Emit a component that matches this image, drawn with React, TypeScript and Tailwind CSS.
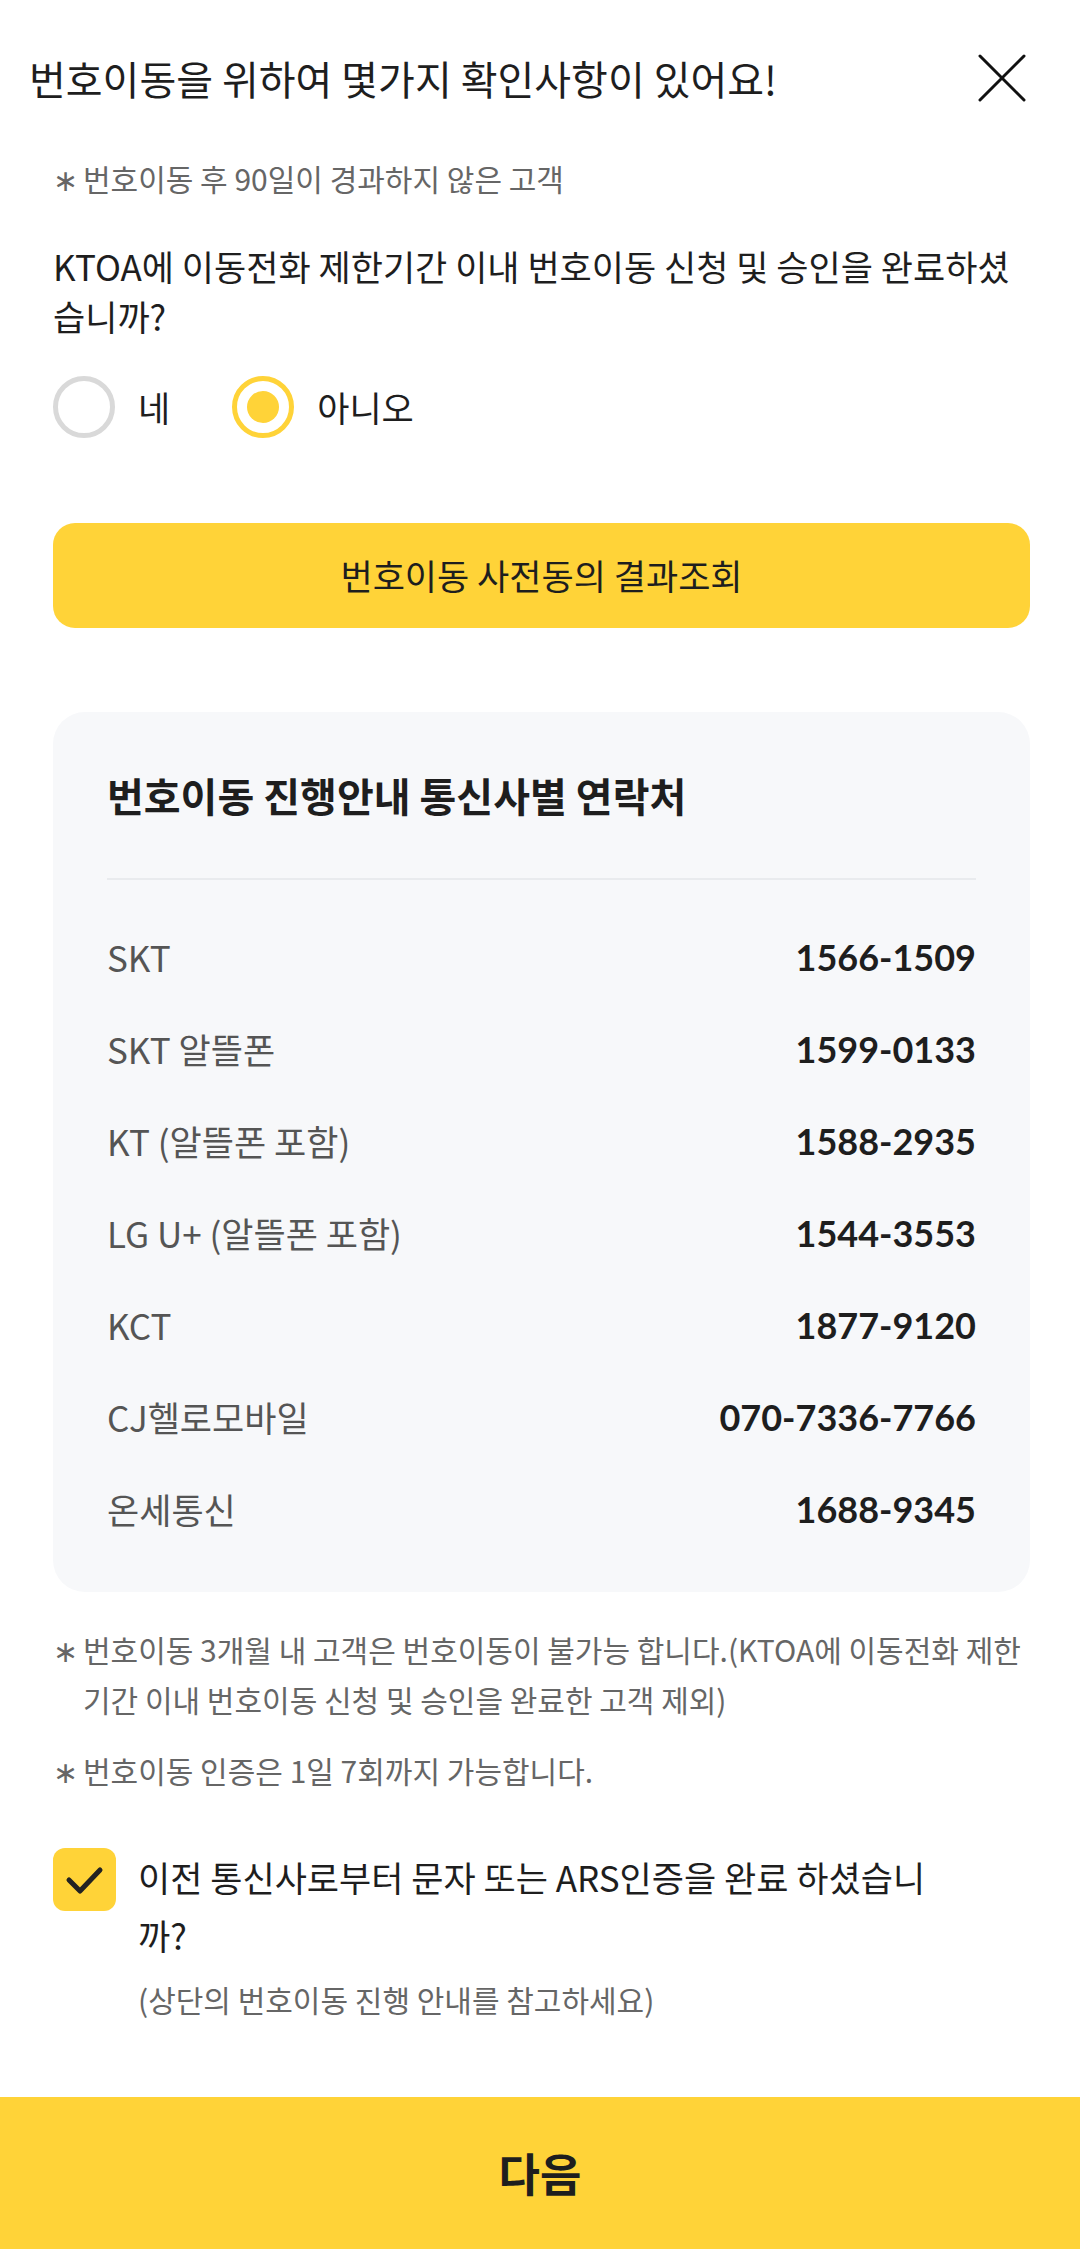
import { useState } from 'react';

const carriers = [
  { name: 'SKT', phone: '1566-1509' },
  { name: 'SKT 알뜰폰', phone: '1599-0133' },
  { name: 'KT (알뜰폰 포함)', phone: '1588-2935' },
  { name: 'LG U+ (알뜰폰 포함)', phone: '1544-3553' },
  { name: 'KCT', phone: '1877-9120' },
  { name: 'CJ헬로모바일', phone: '070-7336-7766' },
  { name: '온세통신', phone: '1688-9345' },
];

const Note = ({ children }: { children: React.ReactNode }) => (
  <div className="flex text-[30px] leading-[50px] text-[#666]">
    <span className="w-[30px] shrink-0">∗</span>
    <span>{children}</span>
  </div>
);

const App = () => {
  const [agree, setAgree] = useState(false);
  const [checked, setChecked] = useState(true);

  return (
    <main className="w-[1080px] min-h-[2249px] bg-white text-[#1e1e1e] font-['Noto_Sans_CJK_KR',sans-serif] flex flex-col">
      <header className="flex items-center justify-between pt-[48px] pl-[29px] pr-[54px] h-[108px]">
        <h1 className="text-[40px] leading-[60px]">번호이동을 위하여 몇가지 확인사항이 있어요!</h1>
        <button className="w-[48px] h-[48px]" aria-label="닫기">
          <svg width="48" height="48" viewBox="0 0 48 48" fill="none" stroke="#111" strokeWidth="3" strokeLinecap="round">
            <path d="M2 2 L46 46 M46 2 L2 46" />
          </svg>
        </button>
      </header>

      <section className="pl-[53px] pr-[50px]">
        <div className="mt-[50px] flex text-[30px] leading-[40px] text-[#666]">
          <span className="w-[30px] shrink-0">∗</span>
          <span>번호이동 후 90일이 경과하지 않은 고객</span>
        </div>

        <p className="mt-[43px] text-[35px] leading-[50px]">
          KTOA에 이동전화 제한기간 이내 번호이동 신청 및 승인을 완료하셨습니까?
        </p>

        <div className="mt-[35px] flex items-center h-[62px]">
          <label className="flex items-center gap-[23px] cursor-pointer" onClick={() => setAgree(true)}>
            <span
              className={
                agree
                  ? 'w-[62px] h-[62px] rounded-full border-[5px] border-[#ffd338] flex items-center justify-center'
                  : 'w-[62px] h-[62px] rounded-full border-[5px] border-[#d9d9d9] flex items-center justify-center'
              }
            >
              {agree && <span className="w-[32px] h-[32px] rounded-full bg-[#ffd338]" />}
            </span>
            <span className="text-[35px]">네</span>
          </label>
          <label className="ml-[62px] flex items-center gap-[23px] cursor-pointer" onClick={() => setAgree(false)}>
            <span
              className={
                !agree
                  ? 'w-[62px] h-[62px] rounded-full border-[5px] border-[#ffd338] flex items-center justify-center'
                  : 'w-[62px] h-[62px] rounded-full border-[5px] border-[#d9d9d9] flex items-center justify-center'
              }
            >
              {!agree && <span className="w-[32px] h-[32px] rounded-full bg-[#ffd338]" />}
            </span>
            <span className="text-[35px]">아니오</span>
          </label>
        </div>

        <button className="mt-[85px] w-full h-[105px] rounded-[22px] bg-[#ffd338] text-[35px]">
          번호이동 사전동의 결과조회
        </button>

        <div className="mt-[84px] rounded-[32px] bg-[#f7f8fa] px-[54px] pt-[57px] pb-[37px]">
          <h2 className="text-[40px] leading-[52px] font-bold">번호이동 진행안내 통신사별 연락처</h2>
          <div className="mt-[57px] h-[2px] bg-[#e9ebee]" />
          <ul className="mt-[31px]">
            {carriers.map((c) => (
              <li key={c.name} className="flex items-center justify-between h-[92px]">
                <span className="text-[35px] text-[#555]">{c.name}</span>
                <span className="text-[36px] font-bold font-['Lato','Noto_Sans_CJK_KR',sans-serif]">{c.phone}</span>
              </li>
            ))}
          </ul>
        </div>

        <div className="mt-[32px]">
          <Note>번호이동 3개월 내 고객은 번호이동이 불가능 합니다.(KTOA에 이동전화 제한기간 이내 번호이동 신청 및 승인을 완료한 고객 제외)</Note>
        </div>
        <div className="mt-[21px]">
          <Note>번호이동 인증은 1일 7회까지 가능합니다.</Note>
        </div>

        <div className="mt-[53px] flex gap-[22px]">
          <button
            className={
              checked
                ? 'w-[63px] h-[63px] shrink-0 rounded-[12px] bg-[#ffd338] flex items-center justify-center'
                : 'w-[63px] h-[63px] shrink-0 rounded-[12px] border-[3px] border-[#d9d9d9] flex items-center justify-center'
            }
            onClick={() => setChecked(!checked)}
            aria-label="확인"
          >
            {checked && (
              <svg width="63" height="63" viewBox="0 0 63 63" fill="none" stroke="#222" strokeWidth="5" strokeLinecap="round" strokeLinejoin="round">
                <path d="M16 32 L27 43 L47 22" />
              </svg>
            )}
          </button>
          <div className="w-[820px]">
            <p className="text-[35px] leading-[58px]">이전 통신사로부터 문자 또는 ARS인증을 완료 하셨습니까?</p>
            <p className="mt-[15px] text-[30px] leading-[40px] text-[#666]">(상단의 번호이동 진행 안내를 참고하세요)</p>
          </div>
        </div>
      </section>

      <button className="mt-auto h-[152px] w-full bg-[#ffd338] text-[45px] font-bold">다음</button>
    </main>
  );
};

export default App;
